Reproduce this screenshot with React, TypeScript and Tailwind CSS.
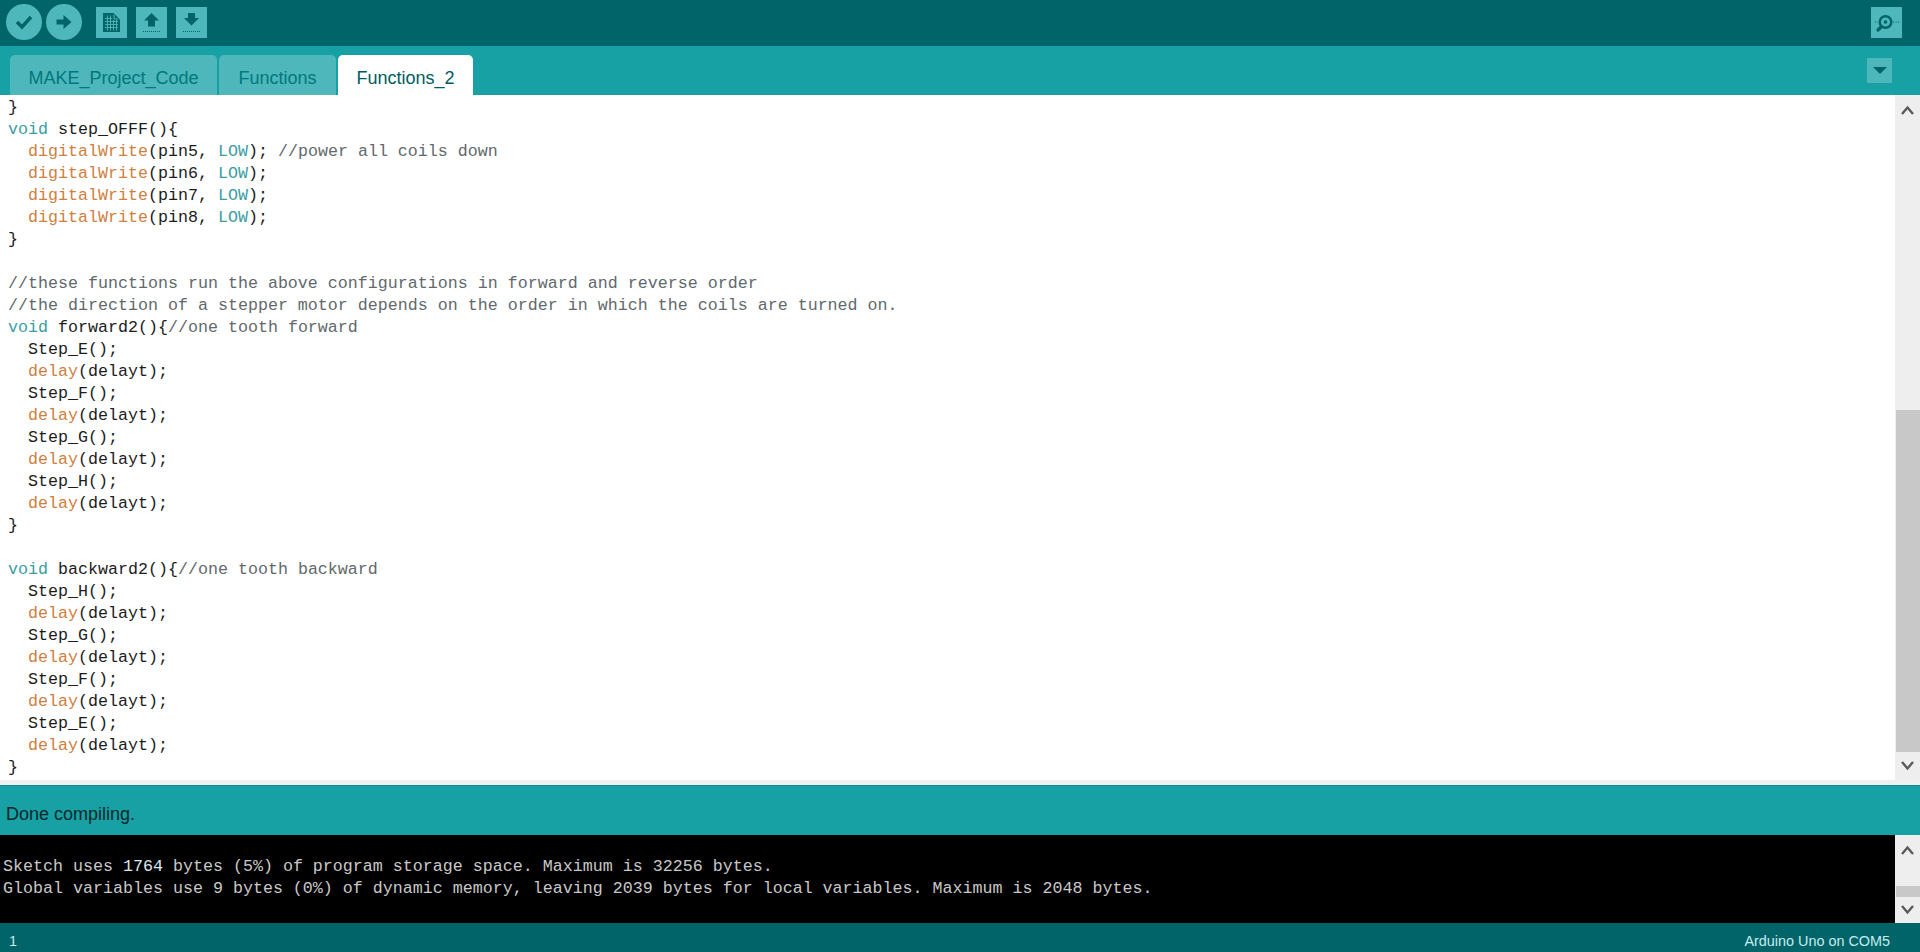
import React from 'react';

const mono = "font-['Liberation_Mono','Courier_New',monospace]";
const sans = "font-['Liberation_Sans',Arial,sans-serif]";

type Tok = [string, string?];

const KW = 'text-[#3a9ea2]';
const FN = 'text-[#cf7f3e]';
const CM = 'text-[#62696c]';

const delay: Tok[] = [['  '], ['delay', FN], ['(delayt);']];
const write = (n: number, rest?: string): Tok[] => [
  ['  '],
  ['digitalWrite', FN],
  [`(pin${n}, `],
  ['LOW', KW],
  [');'],
  ...(rest ? ([[' '], [rest, CM]] as Tok[]) : []),
];

const lines: Tok[][] = [
  [['}']],
  [['void', KW], [' step_OFFF(){']],
  write(5, '//power all coils down'),
  write(6),
  write(7),
  write(8),
  [['}']],
  [],
  [['//these functions run the above configurations in forward and reverse order', CM]],
  [['//the direction of a stepper motor depends on the order in which the coils are turned on.', CM]],
  [['void', KW], [' forward2(){'], ['//one tooth forward', CM]],
  [['  Step_E();']],
  delay,
  [['  Step_F();']],
  delay,
  [['  Step_G();']],
  delay,
  [['  Step_H();']],
  delay,
  [['}']],
  [],
  [['void', KW], [' backward2(){'], ['//one tooth backward', CM]],
  [['  Step_H();']],
  delay,
  [['  Step_G();']],
  delay,
  [['  Step_F();']],
  delay,
  [['  Step_E();']],
  delay,
  [['}']],
];

const Chevron = ({ up }: { up?: boolean }) => (
  <svg width="13" height="10" viewBox="0 0 13 10">
    <path
      d={up ? 'M1 9 L6.5 2.5 L12 9' : 'M1 1 L6.5 7.5 L12 1'}
      fill="none"
      stroke="#5a5a5a"
      strokeWidth="2.4"
    />
  </svg>
);

const Scrollbar = ({ thumb, spacer, down }: { thumb: string; spacer: string; down: string }) => (
  <div className="w-[25px] shrink-0 bg-[#eeeeee] flex flex-col items-center">
    <div className="h-[30px] shrink-0 flex items-center justify-center">
      <Chevron up />
    </div>
    <div className={spacer} />
    <div className={`${thumb} w-[24px] ml-[1px] bg-[#c8c8c8]`} />
    <div className={`${down} shrink-0 flex items-center justify-center`}>
      <Chevron />
    </div>
  </div>
);

const Tab = ({ label, active, w }: { label: string; active?: boolean; w: string }) => (
  <div
    className={`${w} h-[40px] rounded-t-[5px] flex items-center justify-center pt-[7px] text-[18px] ${sans} ${
      active ? 'bg-white text-[#005c5f]' : 'bg-[#4db7bb] text-[#00787c]'
    }`}
  >
    {label}
  </div>
);

const RoundBtn = ({ children }: { children: React.ReactNode }) => (
  <div className="w-[36px] h-[36px] rounded-full bg-[#4db7bb] flex items-center justify-center">{children}</div>
);

const SquareBtn = ({ children }: { children: React.ReactNode }) => (
  <div className="w-[31px] h-[31px] bg-[#4db7bb] flex items-center justify-center">{children}</div>
);

const Dots = () => <path d="M7 24.5 H24" stroke="#006468" strokeWidth="1" strokeDasharray="1 1" fill="none" />;

export default function App() {
  return (
    <div className="h-[952px] w-[1920px] flex flex-col overflow-hidden bg-white">
      {/* toolbar */}
      <div className="h-[46px] shrink-0 bg-[#006468] flex items-center pl-[6px] pr-[18px] pb-[2px]">
        <RoundBtn>
          <svg width="20" height="20" viewBox="0 0 20 20">
            <path d="M3 10 L8 15 L17 5" fill="none" stroke="#006468" strokeWidth="3.4" />
          </svg>
        </RoundBtn>
        <div className="ml-[4px]">
          <RoundBtn>
            <svg width="20" height="20" viewBox="0 0 20 20">
              <path d="M2.5 7.5 H9.5 V3 L17.5 10 L9.5 17 V12.5 H2.5 Z" fill="#006468" />
            </svg>
          </RoundBtn>
        </div>
        <div className="ml-[14px] flex gap-[9px]">
          <SquareBtn>
            <svg width="31" height="31" viewBox="0 0 31 31">
              <path d="M7 6 H17.5 L24 12.5 V25 H7 Z" fill="#006468" />
              <path d="M18 7.5 L18 12 L22.5 12" fill="none" stroke="#4db7bb" strokeWidth="1" />
              <path
                d="M9 11.5 H16 M9 14.5 H22 M9 17.5 H22 M9 20.5 H22 M11.5 8.5 V23.5 M14.5 8.5 V23.5 M17.5 13 V23.5 M20.5 13 V23.5"
                stroke="#4db7bb"
                strokeWidth="0.9"
                fill="none"
              />
            </svg>
          </SquareBtn>
          <SquareBtn>
            <svg width="31" height="31" viewBox="0 0 31 31">
              <path d="M15.5 6 L23 13.5 H19 V19.5 H12 V13.5 H8 Z" fill="#006468" />
              <Dots />
            </svg>
          </SquareBtn>
          <SquareBtn>
            <svg width="31" height="31" viewBox="0 0 31 31">
              <path d="M12 6 H19 V11 H23 L15.5 18.5 L8 11 H12 Z" fill="#006468" />
              <Dots />
            </svg>
          </SquareBtn>
        </div>
        <div className="ml-auto">
          <SquareBtn>
            <svg width="31" height="31" viewBox="0 0 31 31">
              <circle cx="14.5" cy="15" r="5.8" fill="none" stroke="#006468" strokeWidth="2.4" />
              <circle cx="14.5" cy="15" r="1.8" fill="#006468" />
              <path d="M10.5 19.5 L7 23" stroke="#006468" strokeWidth="3.2" strokeLinecap="round" />
              <path d="M4 15 H7 M22 15 H28" stroke="#006468" strokeWidth="1" strokeDasharray="1 1.5" />
            </svg>
          </SquareBtn>
        </div>
      </div>

      {/* tabs */}
      <div className="h-[49px] shrink-0 bg-[#17a1a5] flex items-end pl-[10px] pr-[28px] relative">
        <div className="flex gap-[2px]">
          <Tab label="MAKE_Project_Code" w="w-[207px]" />
          <Tab label="Functions" w="w-[117px]" />
          <Tab label="Functions_2" active w="w-[135px]" />
        </div>
        <div className="ml-auto mb-[12px] w-[25px] h-[25px] bg-[#4db7bb] flex items-center justify-center">
          <svg width="14" height="8" viewBox="0 0 14 8">
            <path d="M0 0 H14 L7 7 Z" fill="#006468" />
          </svg>
        </div>
      </div>

      {/* editor */}
      <div className="h-[685px] shrink-0 flex overflow-hidden">
        <div
          className={`flex-1 min-w-0 pl-[8px] pt-[2px] text-[16.67px] leading-[22px] whitespace-pre text-[#1c1c1c] ${mono}`}
        >
          {lines.map((line, i) => (
            <div key={i} className="h-[22px]">
              {line.map(([text, cls], j) => (
                <span key={j} className={cls}>
                  {text}
                </span>
              ))}
            </div>
          ))}
        </div>
        <Scrollbar spacer="h-[285px] shrink-0" thumb="flex-1" down="h-[28px]" />
      </div>
      <div className="h-[5px] shrink-0 bg-[#f0f0f0]" />

      {/* status */}
      <div className="h-[50px] shrink-0 bg-[#17a1a5] border-t-[1px] border-[#0e8a8e] flex items-center pl-[6px] pt-[7px]">
        <span className={`text-[18px] text-[#00282a] ${sans}`}>Done compiling.</span>
      </div>

      {/* console */}
      <div className="h-[88px] shrink-0 bg-black flex overflow-hidden">
        <div
          className={`flex-1 min-w-0 pl-[3px] pt-[21px] text-[16.67px] leading-[22px] whitespace-pre text-[#c8c8c8] ${mono}`}
        >
          <div>
            Sketch uses <span className="text-[#dfe8ea]">1764</span> bytes (5%) of program storage space. Maximum is 32256 bytes.
          </div>
          <div>Global variables use 9 bytes (0%) of dynamic memory, leaving 2039 bytes for local variables. Maximum is 2048 bytes.</div>
        </div>
        <Scrollbar spacer="flex-1" thumb="h-[11px] shrink-0" down="h-[26px]" />
      </div>

      {/* footer */}
      <div className={`flex-1 bg-[#006468] flex items-center justify-between pl-[9px] pr-[30px] pt-[8px] text-[14.4px] text-[#c6ecee] ${sans}`}>
        <span>1</span>
        <span>Arduino Uno on COM5</span>
      </div>
    </div>
  );
}
